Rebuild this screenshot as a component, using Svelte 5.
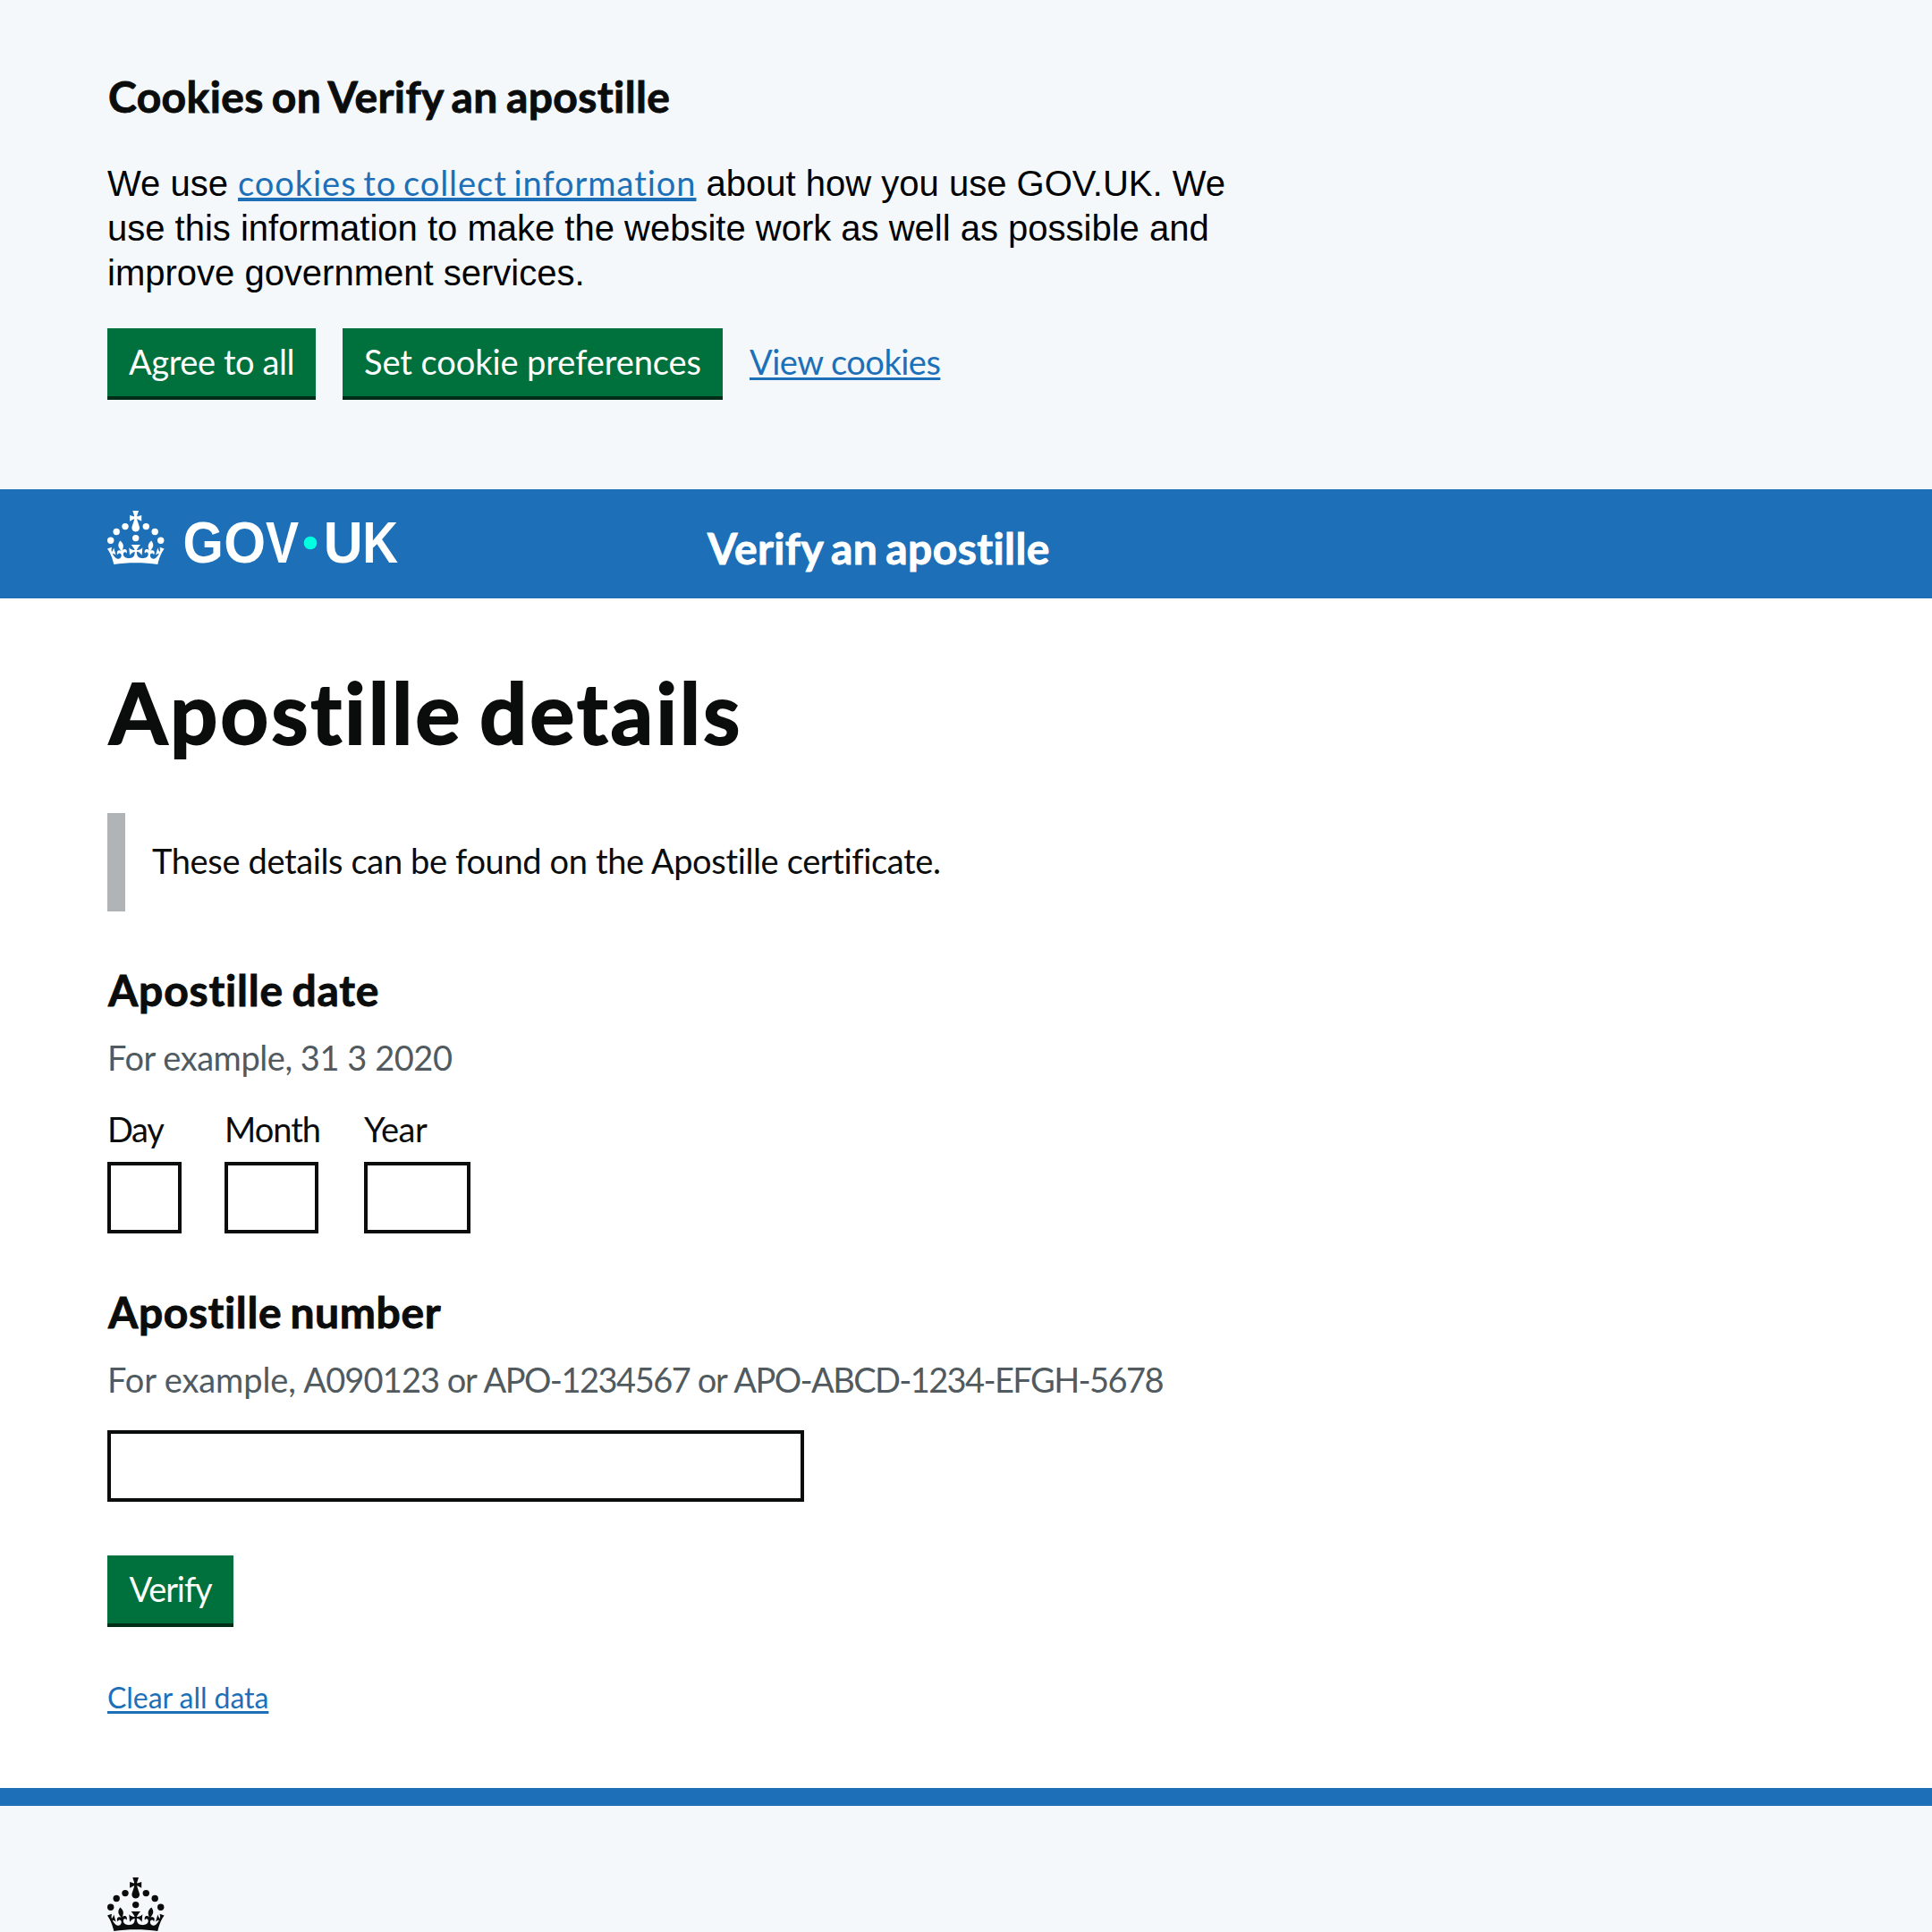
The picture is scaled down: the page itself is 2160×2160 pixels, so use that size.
<script>
  const dateFields = [
    { label: 'Day', id: 'day' },
    { label: 'Month', id: 'month' },
    { label: 'Year', id: 'year' }
  ];
</script>

{#snippet crown()}
  <circle cx="20" cy="17.6" r="3.7" />
  <circle cx="10.2" cy="23.5" r="3.7" />
  <circle cx="3.7" cy="33.2" r="3.7" />
  <circle cx="31.7" cy="30.6" r="3.7" />
  <circle cx="43.3" cy="17.6" r="3.7" />
  <circle cx="53.2" cy="23.5" r="3.7" />
  <circle cx="59.7" cy="33.2" r="3.7" />
  <path d="M33.1,9.8c.2-.1.3-.3.5-.5l4.6,2.4v-6.8l-4.6,1.5c-.1-.2-.3-.3-.5-.5l1.9-5.9h-6.7l1.9,5.9c-.2.1-.3.3-.5.5l-4.6-1.5v6.8l4.6-2.4c.1.2.3.3.5.5l-2.6,8c-.9,2.8,1.2,5.7,4.1,5.7h0c3,0,5.1-2.9,4.1-5.7l-2.6-8ZM37,37.9s-3.4,3.8-4.1,6.1c2.2,0,4.2-.5,6.4-2.8l-.7,8.5c-2-2.8-4.4-4.1-5.7-3.8.1,3.1.5,6.7,5.8,7.2,3.7.3,6.7-1.5,7-3.8.4-2.6-2-4.3-3.7-1.6-1.4-4.5,2.4-6.1,4.9-3.2-1.9-4.5-1.8-7.7,2.4-10.9,3,4,2.6,7.3-1.2,11.1,2.4-1.3,6.2,0,4,4.6-1.2-2.8-3.7-2.2-4.2.2-.3,1.7.7,3.7,3,4.2,1.9.3,4.7-.9,7-5.9-1.3,0-2.4.7-3.9,1.7l2.4-8c.6,2.3,1.4,3.7,2.2,4.5.6-1.6.5-2.8,0-5.3l5,1.8c-2.6,3.6-5.2,8.7-7.3,17.5-7.4-1.1-15.7-1.7-24.5-1.7h0c-8.8,0-17.1.6-24.5,1.7-2.1-8.9-4.7-13.9-7.3-17.5l5-1.8c-.5,2.5-.6,3.7,0,5.3.8-.8,1.6-2.3,2.2-4.5l2.4,8c-1.5-1-2.6-1.7-3.9-1.7,2.3,5,5.2,6.2,7,5.9,2.3-.4,3.3-2.4,3-4.2-.5-2.4-3-3.1-4.2-.2-2.2-4.6,1.6-6,4-4.6-3.7-3.7-4.2-7.1-1.2-11.1,4.2,3.2,4.3,6.4,2.4,10.9,2.5-2.8,6.3-1.3,4.9,3.2-1.8-2.7-4.1-1-3.7,1.6.3,2.3,3.3,4.1,7,3.8,5.4-.5,5.7-4.2,5.8-7.2-1.3-.2-3.7,1-5.7,3.8l-.7-8.5c2.2,2.3,4.2,2.7,6.4,2.8-.7-2.3-4.1-6.1-4.1-6.1h10.6,0Z" />
{/snippet}

<div class="page">
  <section class="cookies">
    <h2 class="cookies-title">Cookies on Verify an apostille</h2>
    <p class="cookies-text">
      We use <a class="cookies-link" href="#cookies">cookies to collect information</a> about how you use GOV.UK. We use this
      information to make the website work as well as possible and improve government services.
    </p>
    <div class="cookies-actions">
      <button class="button agree">Agree to all</button>
      <button class="button prefs">Set cookie preferences</button>
      <a class="view-link" href="#view">View cookies</a>
    </div>
  </section>

  <header class="header">
    <svg class="logotype" viewBox="0 0 324 60" width="324" height="60" fill="currentColor">
      <g>{@render crown()}</g>
      <g class="wordmark">
        <text x="84.6" y="58" textLength="45.3" lengthAdjust="spacingAndGlyphs">G</text>
        <text x="130.2" y="58" textLength="46.8" lengthAdjust="spacingAndGlyphs">O</text>
        <text x="177" y="58" textLength="37.1" lengthAdjust="spacingAndGlyphs">V</text>
        <text x="241.8" y="58" textLength="43.9" lengthAdjust="spacingAndGlyphs">U</text>
        <text x="285.3" y="58" textLength="39.8" lengthAdjust="spacingAndGlyphs">K</text>
      </g>
      <circle class="logo-dot" cx="227" cy="36" r="7.3" />
    </svg>
    <span class="title">Verify an apostille</span>
  </header>

  <main class="main">
    <h1>Apostille details</h1>
    <div class="inset">These details can be found on the Apostille certificate.</div>

    <h2 class="date-title">Apostille date</h2>
    <p class="hint date-hint">For example, 31 3 2020</p>
    <div class="date-fields">
      {#each dateFields as field}
        <div class="field {field.id}">
          <label for={field.id}>{field.label}</label>
          <input id={field.id} type="text" />
        </div>
      {/each}
    </div>

    <h2 class="number-title">Apostille number</h2>
    <p class="hint number-hint"><span class="lead">For example,</span> <span class="short">A090123</span> or <span class="medium">APO-1234567</span> or <span class="long">APO-ABCD-1234-EFGH-5678</span></p>
    <input class="number-input" type="text" aria-label="Apostille number" />

    <button class="button verify">Verify</button>
    <a class="clear-link" href="#clear">Clear all data</a>
  </main>

  <footer class="footer">
    <svg viewBox="0 0 64 60" width="64" height="60" fill="currentColor">{@render crown()}</svg>
  </footer>
</div>

<style>
  :global(body) {
    background: #fff;
  }

  .page {
    height: 2160px;
    overflow: hidden;
    display: flex;
    flex-direction: column;
    box-sizing: border-box;
    font-family: Lato, 'Noto Sans', sans-serif;
    font-size: 38px;
    line-height: 50px;
    color: #0b0c0c;
    font-variant-ligatures: none;
  }

  h1,
  h2,
  p {
    margin: 0;
  }

  h2,
  .title {
    font-size: 48px;
    line-height: 50px;
    font-weight: 700;
    word-spacing: -3px;
    -webkit-text-stroke: 0.9px currentColor;
  }

  a {
    color: #1d70b8;
    text-decoration: underline;
    text-decoration-thickness: 3px;
    text-underline-offset: 3px;
    text-decoration-skip-ink: none;
  }

  .cookies {
    height: 547px;
    box-sizing: border-box;
    padding: 83px 120px 0;
    background: #f4f8fb;
  }

  .cookies-title {
    padding-left: 1px;
    letter-spacing: 0.4px;
  }

  .cookies-text {
    width: 1270px;
    margin-top: 47px;
    font-family: 'Liberation Sans', Arial, sans-serif;
    font-size: 40px;
    line-height: 50px;
    color: #000;
  }

  .cookies-link {
    font-family: Lato, 'Noto Sans', sans-serif;
    font-size: 38px;
    line-height: 1;
    letter-spacing: 0.96px;
    word-spacing: -3px;
    text-decoration-thickness: 4px;
    text-underline-offset: 2px;
  }

  .cookies-actions {
    display: flex;
    align-items: center;
    gap: 30px;
    margin-top: 37px;
  }

  .button {
    height: 80px;
    box-sizing: border-box;
    padding: 0 0 2px;
    border: 0;
    border-bottom: 4px solid #002d18;
    border-radius: 0;
    background: #00703c;
    color: #fff;
    font: inherit;
    text-align: center;
    white-space: nowrap;
  }

  .agree {
    width: 233px;
    letter-spacing: -0.42px;
  }

  .prefs {
    width: 425px;
    letter-spacing: -0.07px;
  }

  .view-link {
    padding-bottom: 6px;
    letter-spacing: -0.5px;
  }

  .header {
    display: flex;
    align-items: flex-start;
    height: 122px;
    box-sizing: border-box;
    padding: 24px 120px 0;
    background: #1d70b8;
    color: #fff;
  }

  .logotype {
    flex: none;
    margin-right: 347px;
  }

  .wordmark {
    font: 700 64px 'Liberation Sans', Arial, sans-serif;
  }

  .logo-dot {
    fill: #00ffe0;
  }

  .title {
    margin-top: 17px;
    letter-spacing: 0.4px;
  }

  .main {
    display: flex;
    flex-direction: column;
    align-items: flex-start;
    height: 1330px;
    box-sizing: border-box;
    padding: 77px 120px 0;
  }

  h1 {
    padding-left: 2px;
    font-size: 94px;
    line-height: 100px;
    font-weight: 700;
    letter-spacing: 2.85px;
    word-spacing: -7px;
    -webkit-text-stroke: 1.8px currentColor;
  }

  .inset {
    height: 110px;
    box-sizing: border-box;
    margin-top: 63px;
    padding: 28px 30px;
    border-left: 20px solid #b1b4b6;
    letter-spacing: -0.36px;
  }

  .date-title,
  .number-title {
    margin-top: 63px;
    padding-left: 1px;
  }

  .date-title {
    letter-spacing: 0.8px;
  }

  .number-title {
    letter-spacing: 0.6px;
  }

  .hint {
    margin-top: 25px;
    color: #505a5f;
  }

  .date-hint {
    letter-spacing: -0.45px;
  }

  .date-fields {
    display: flex;
    margin-top: 30px;
  }

  .field {
    display: flex;
    flex-direction: column;
    align-items: flex-start;
    gap: 12px;
  }

  .day {
    width: 131px;
    letter-spacing: -1.3px;
  }

  .month {
    width: 156px;
    letter-spacing: -1px;
  }

  .year {
    width: 119px;
    letter-spacing: -0.5px;
  }

  input {
    height: 80px;
    box-sizing: border-box;
    border: 4px solid #0b0c0c;
    border-radius: 0;
    background: #fff;
    padding: 10px;
  }

  .day input {
    width: 83px;
  }

  .month input {
    width: 105px;
  }

  .year input {
    width: 119px;
  }

  .number-hint {
    letter-spacing: -1.24px;
    white-space: nowrap;
  }

  .lead {
    letter-spacing: -0.1px;
  }

  .short {
    letter-spacing: -0.85px;
  }

  .medium {
    letter-spacing: -1.5px;
  }

  .long {
    letter-spacing: -1.6px;
  }

  .number-input {
    width: 779px;
    margin-top: 32px;
  }

  .verify {
    width: 141px;
    margin-top: 60px;
    letter-spacing: -1.1px;
  }

  .clear-link {
    margin-top: 59px;
    font-size: 32px;
    line-height: 40px;
    letter-spacing: -0.05px;
  }

  .footer {
    flex: 1;
    box-sizing: border-box;
    padding: 80px 120px 0;
    border-top: 20px solid #1d70b8;
    background: #f4f8fb;
  }

  svg {
    display: block;
    overflow: visible;
  }
</style>
